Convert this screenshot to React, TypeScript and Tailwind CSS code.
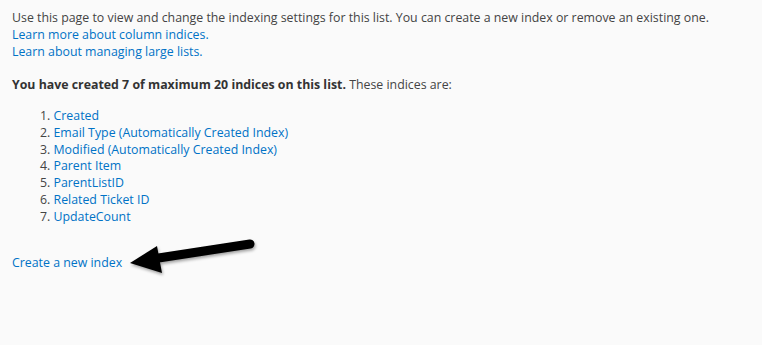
const indices = [
  "Created",
  "Email Type (Automatically Created Index)",
  "Modified (Automatically Created Index)",
  "Parent Item",
  "ParentListID",
  "Related Ticket ID",
  "UpdateCount",
];

export default function App() {
  return (
    <div className="relative h-[345px] w-[762px] overflow-hidden bg-[#fafafa] px-3 pt-[9px] font-['Open_Sans',sans-serif] text-[12.35px] leading-[17px] text-[#444]">
      <p>Use this page to view and change the indexing settings for this list. You can create a new index or remove an existing one.</p>
      <p><a className="text-[#0072c6]">Learn more about column indices.</a></p>
      <p><a className="text-[#0072c6]">Learn about managing large lists.</a></p>

      <p className="mt-[16px]">
        <span className="font-bold text-[#333]">You have created 7 of maximum 20 indices on this list.</span> These indices are:
      </p>

      <ol className="mt-[15px] pl-[28px]">
        {indices.map((name, i) => (
          <li key={name} className="leading-[16.8px]">
            {i + 1}. <a className="text-[#0072c6]">{name}</a>
          </li>
        ))}
      </ol>

      <p className="mt-[28px]"><a className="text-[#0072c6]">Create a new index</a></p>

      <svg className="absolute left-0 top-0" width="762" height="345" viewBox="0 0 762 345">
        <defs>
          <filter id="sh" x="-20%" y="-50%" width="140%" height="200%">
            <feDropShadow dx="1" dy="2" stdDeviation="1.5" floodColor="#000" floodOpacity="0.35" />
          </filter>
        </defs>
        <g filter="url(#sh)">
          <line x1="250" y1="244" x2="152" y2="259" stroke="#000" strokeWidth="9" strokeLinecap="round" />
          <polygon points="130,263 157,246 162,273" fill="#000" />
        </g>
      </svg>
    </div>
  );
}
